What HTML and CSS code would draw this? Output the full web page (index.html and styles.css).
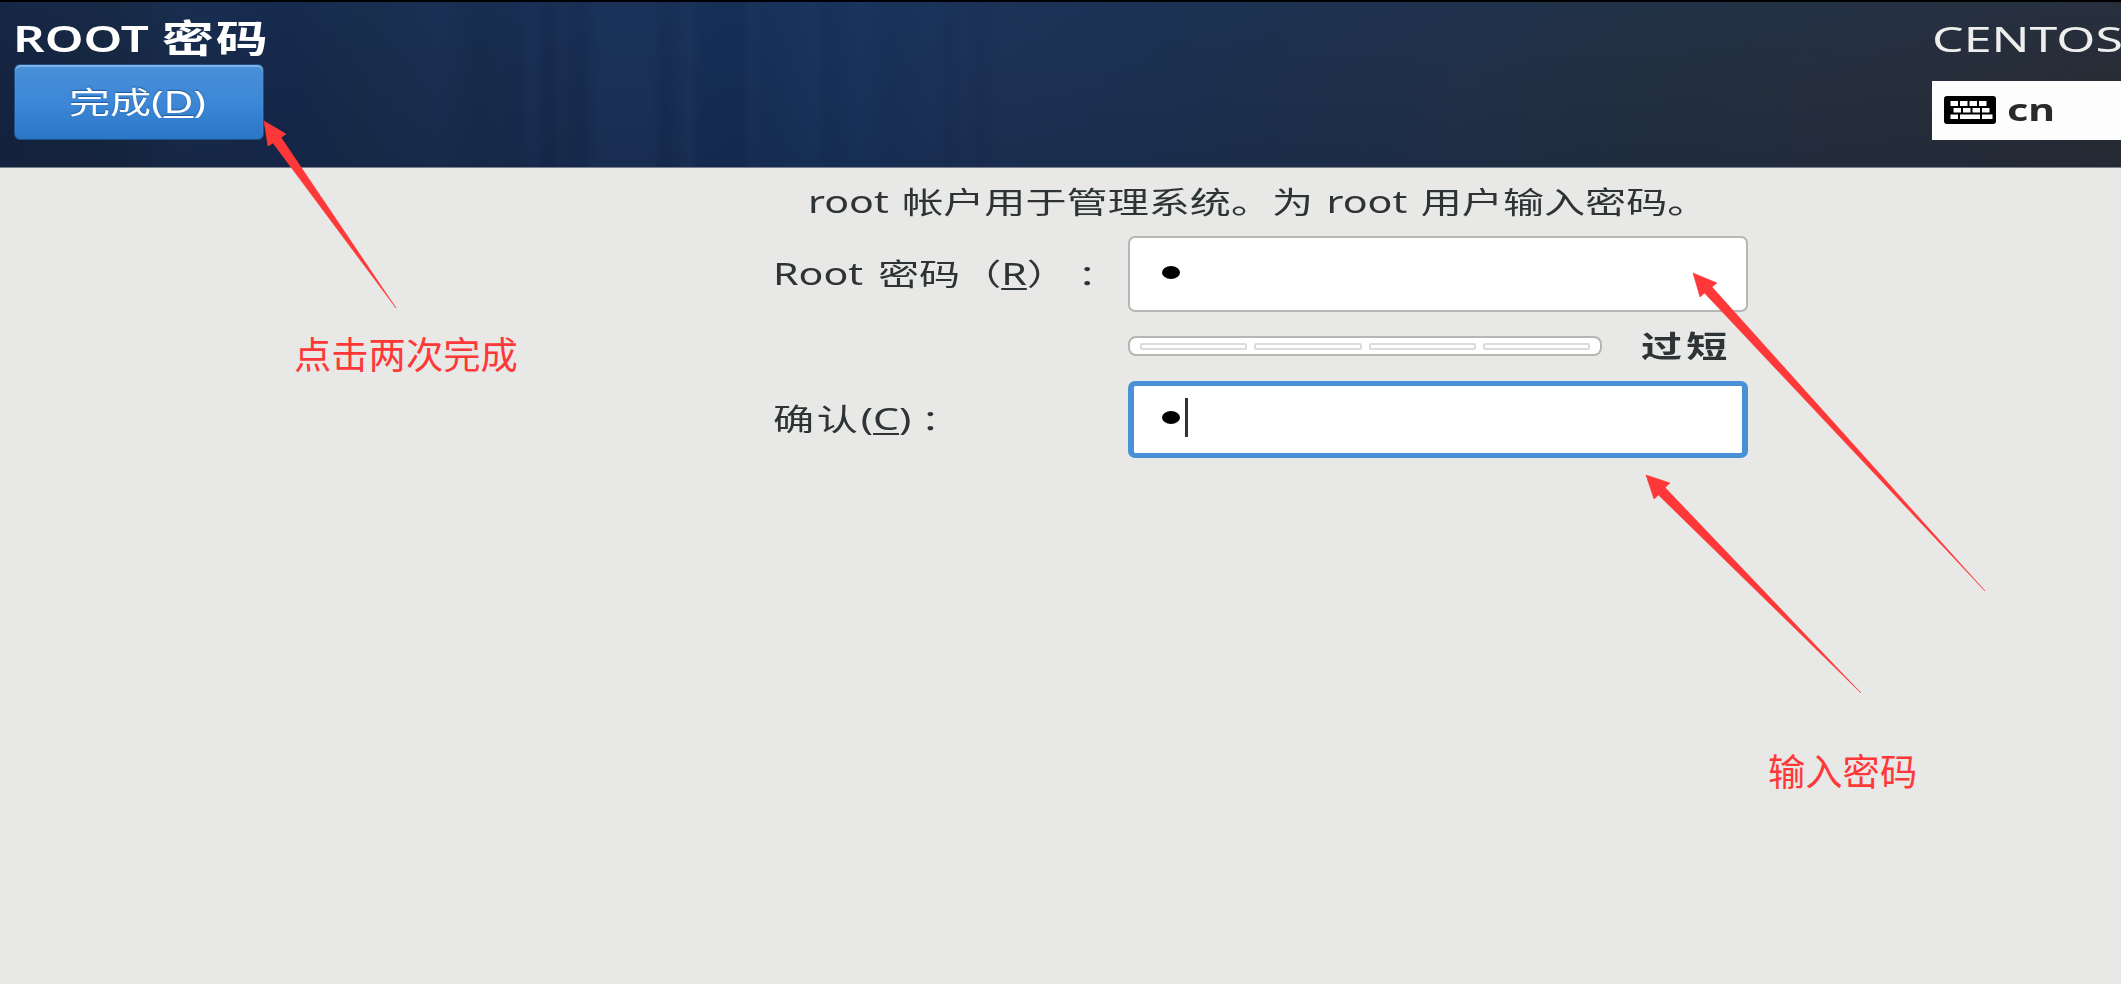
FILE: index.html
```html
<!doctype html>
<html lang="zh-CN">
  <head>
    <meta charset="utf-8" />
    <meta name="viewport" content="width=device-width, initial-scale=1" />
    <title>ROOT 密码</title>
    <link rel="stylesheet" href="styles.css">
  </head>

  <body>
    <header class="topbar">
      <div class="topbar-left">
        <h1 class="title"><span class="wide">ROOT <span class="title-cjk">密码</span></span></h1>
        <button type="button" class="done-button">
          <span class="wide">完成(<span class="key">D</span>)</span>
        </button>
      </div>
      <div class="topbar-right">
        <div class="product"><span class="wide">CENTOS</span></div>
        <div class="layout-indicator">
          <svg class="keyboard" width="52" height="28" viewBox="0 0 52 28">
            <rect width="52" height="28" rx="3" />
            <g fill="#fff">
              <path d="M6.500 5H14v5H6.500zM16 5h7.500v5H16zM25.500 5H33v5h-7.500zM35 5h7.500v5H35z" />
              <path d="M9.500 12H17v4.500H9.500zM19 12h7.500v4.500H19zM28.500 12H36v4.500h-7.500zM38 12h7.500v4.500H38z" />
              <path d="M6.500 18.500H14V23H6.500zM16 18.500h20V23H16zM38 18.500h10.500V23H38z" />
            </g>
          </svg>
          <span class="wide">cn</span>
        </div>
      </div>
    </header>

    <main class="content">
      <p class="intro"><span class="wide">root 帐户用于管理系统。为 root 用户输入密码。</span></p>
      <div class="form">
        <div class="label">
          <span class="wide">Root 密码（<span class="key">R</span>）<span class="colon" lang="ja">：</span></span>
        </div>
        <div class="entry"><span class="dot"></span></div>

        <div class="strength">
          <div class="meter"><i></i><i></i><i></i><i></i></div>
          <strong class="verdict"><span class="wide">过短</span></strong>
        </div>

        <div class="label">
          <span class="wide"><span class="spaced">确认</span>(<span class="key">C</span>)<span class="colon" lang="ja">：</span></span>
        </div>
        <div class="entry focused"><span class="dot"></span><span class="caret"></span></div>
      </div>
    </main>

    <!-- notes drawn over the dialog -->
    <svg class="arrows" width="2121" height="984" viewBox="0 0 2121 984">
      <path d="M264 121L286 134L281 137.500L396 308L273 143L268 146Z" />
      <path d="M1693 273L1717 283L1712 287L1985 591L1704.500 293L1700 297Z" />
      <path d="M1646 475L1670 483L1665 487.500L1861 693L1658.500 495L1654 499Z" />
    </svg>
    <div class="note note-done">点击两次完成</div>
    <div class="note note-password">输入密码</div>
  </body>
</html>
```

FILE: styles.css
```css
body {
  background: #e8e8e6;
  color: #2e3436;
  font-family: "Noto Sans", "Noto Sans CJK SC", sans-serif;
  font-size: 30px;
  height: 984px;
  line-height: 40px;
  margin: 0;
  overflow: hidden;
  position: relative;
  text-spacing-trim: space-all;
}

.wide {
  display: inline-block;
  transform: scaleX(1.37);
  transform-origin: left center;
  white-space: nowrap;
}

.key {
  text-decoration: underline;
  text-decoration-thickness: 2px;
  text-underline-offset: 3px;
}

/* the ja form of the colon sits in the middle of its cell */
.colon {
  font-family: "Noto Sans CJK JP", sans-serif;
  font-size: 28px;
  line-height: 1;
  vertical-align: -2px;
}

.spaced {
  letter-spacing: 2px;
}

.topbar {
  background:
    linear-gradient(rgba(30, 70, 120, 0.12), transparent 50%, rgba(10, 20, 40, 0.12)),
    linear-gradient(90deg,
      #15233f 0, #16263f 120px, #182a4a 180px, #15274a 290px, #172b49 360px, #192d50 440px,
      #162a49 480px, #172b4c 500px, #162a4c 515px, #1a2e53 532px, #16294c 548px, #192d50 562px, #162a4d 578px,
      #1a3056 600px, #1a3056 650px, #162b51 665px, #1b3157 690px, #152c53 700px, #142b52 742px,
      #1a3057 750px, #162e55 765px, #19325a 815px, #162e55 828px, #19325a 860px, #182f55 890px, #1b3157 935px,
      #192e53 950px, #1c3155 965px, #1a2e52 980px, #1c3154 1000px, #1b3052 1100px, #1c2f4c 1250px,
      #212f48 1450px, #222f40 1650px, #252e3d 1850px, #282c35 2121px);
  border-bottom: 1px solid #79818e;
  border-top: 2px solid #000;
  box-sizing: border-box;
  color: #fff;
  display: flex;
  height: 168px;
  justify-content: space-between;
}

.topbar-left {
  padding: 13px 0 0 14px;
}

.title {
  font-size: 36px;
  font-weight: 600;
  height: 49px;
  line-height: 48px;
  margin: 0 0 0 -1px;
}

.title-cjk {
  font-size: 38px;
  letter-spacing: 1.5px;
  line-height: 1;
}

.done-button {
  background: linear-gradient(#4a90d9, #3d87d6 50%, #2a76c6);
  border: 1px solid #1c5187;
  border-radius: 6px;
  box-shadow: inset 0 2px 1px #86b5e8;
  box-sizing: border-box;
  color: #fff;
  display: block;
  font: inherit;
  height: 76px;
  padding: 0 0 1px 54px;
  text-align: left;
  text-shadow: 0 -1px 1px #1f5b99;
  width: 250px;
}

.topbar-right {
  padding-top: 13px;
  width: 189px;
}

.product {
  color: #eeeeec;
  font-size: 35px;
  line-height: 48px;
}

.product .wide {
  transform: scaleX(1.43);
}

.layout-indicator {
  align-items: center;
  background: #fdfdfd;
  box-sizing: border-box;
  color: #2a2a2a;
  display: flex;
  font-weight: bold;
  gap: 11px;
  height: 59px;
  margin-top: 18px;
  padding: 0 0 1px 12px;
}

.content {
  padding-top: 14px;
}

.intro {
  margin: 0 0 14px 808px;
  word-spacing: 2px;
}

.form {
  display: grid;
  grid-template-columns: 355px 620px;
  margin-left: 773px;
}

.label {
  line-height: 75px;
  word-spacing: 3px;
}

.entry {
  align-items: center;
  background: #fff;
  border: 2px solid #b6b6b3;
  border-radius: 7px;
  box-sizing: border-box;
  display: flex;
  gap: 5px;
  height: 76px;
  padding: 0 0 3px 32px;
}

.entry.focused {
  border: solid #4a90d9;
  border-width: 5px 6px;
  height: 77px;
  padding: 0 0 4px 28px;
}

.dot {
  background: #000;
  border-radius: 50%;
  height: 13px;
  width: 18px;
}

.caret {
  background: #2e3436;
  height: 39px;
  width: 3px;
}

.strength {
  align-items: center;
  box-sizing: border-box;
  display: flex;
  gap: 39px;
  grid-column: 2;
  height: 69px;
  padding-bottom: 2px;
}

.verdict {
  letter-spacing: 3px;
}

.meter {
  background: #fff;
  border: 2px solid #b6b6b3;
  border-radius: 8px;
  box-sizing: border-box;
  display: flex;
  gap: 7px;
  height: 20px;
  padding: 5px 10px;
  width: 474px;
}

.meter i {
  border: 2px solid #dcdcda;
  border-radius: 2px;
  box-sizing: border-box;
  flex: 1;
  height: 7px;
}

.arrows {
  fill: #fe3838;
  left: 0;
  position: absolute;
  stroke: #fe3838;
  stroke-width: 0.6;
  top: 0;
}

.note {
  color: #fe3838;
  font-family: "Noto Sans CJK SC", sans-serif;
  font-size: 37.3px;
  line-height: 48px;
  position: absolute;
  white-space: nowrap;
}

.note-done {
  left: 294px;
  top: 329px;
}

.note-password {
  left: 1768px;
  top: 746px;
}
```
